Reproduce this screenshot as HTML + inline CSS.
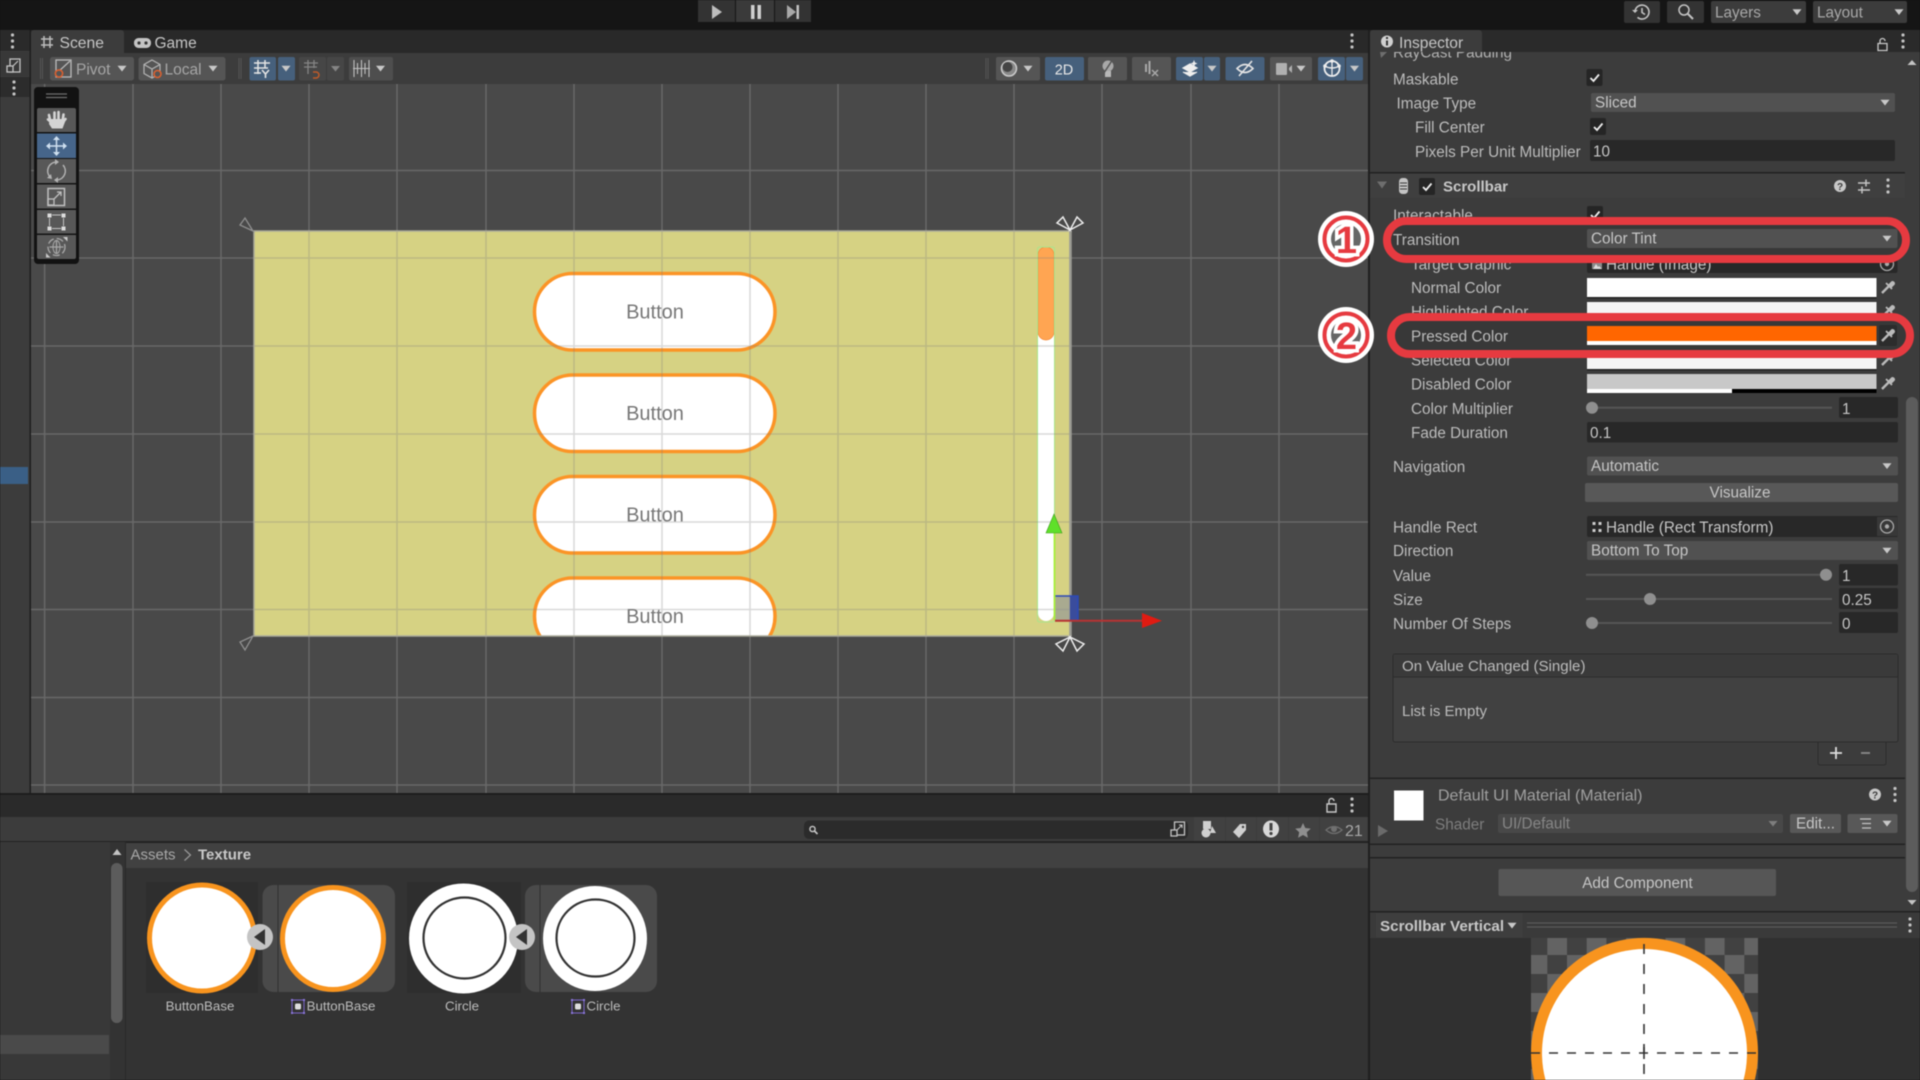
<!DOCTYPE html>
<html><head><meta charset="utf-8"><title>Unity Scrollbar</title>
<style>
html,body{margin:0;padding:0;background:#151515;width:1920px;height:1080px;overflow:hidden}
svg{display:block;filter:blur(.55px)}
text{font-family:"Liberation Sans",sans-serif;font-size:15.3px;fill:#bcbcbc}
.d{fill:#c6c6c6}
.m{fill:#8c8c8c}
.b{font-weight:bold;fill:#c8c8c8}
.n{font-size:13.3px;fill:#bdbdbd;text-anchor:middle}
.s{stroke:#c8c8c8;fill:none;stroke-width:1.6}
.bt{font-size:20px;fill:#777;text-anchor:middle}
</style></head><body>
<svg width="1920" height="1080" viewBox="0 0 1920 1080" xmlns="http://www.w3.org/2000/svg">
<defs>
<path id="a" d="M-4.5-2.8H4.5L0 3Z" fill="#c8c8c8"/>
<g id="e" fill="none" stroke="#bbb" stroke-width="1.8"><path d="M-6 6L1-1" stroke-width="2.4"/><path d="M-2-4l6 6"/><path d="M1-2l3-3a1.6 1.6 0 0 1 2 2l-3 3z" fill="#bbb"/></g>
<g id="v" fill="#c4c4c4"><circle cy="-6" r="1.6"/><circle r="1.6"/><circle cy="6" r="1.6"/></g>
<g id="c"><rect width="16" height="17" rx="2" fill="#252525"/><path d="M4 9l3 3 5.5-6.5" fill="none" stroke="#eee" stroke-width="1.8"/></g>
<g id="t"><circle r="6.5" fill="none" stroke="#aaa" stroke-width="1.3"/><circle r="2.2" fill="#aaa"/></g>
<g id="h"><circle r="6" fill="#c8c8c8"/><text x="0" y="4" text-anchor="middle" style="font-size:10px;font-weight:bold;fill:#3c3c3c">?</text></g>
<g id="sp"><g fill="none" stroke="#7a66c8" stroke-width="1"><rect x="0" y="0" width="12" height="13"/></g><path d="M-1-1h2v2h-2zM11-1h2v2h-2zM-1 12h2v2h-2zM11 12h2v2h-2z" fill="#8a76d8"/><rect x="3" y="3.500" width="6" height="6" rx="1.500" fill="#ddd"/></g>
<pattern id="ck" x="1527.6" y="936" width="39.4" height="38" patternUnits="userSpaceOnUse"><rect width="39.4" height="38" fill="#414141"/><rect x="19.7" width="19.7" height="19" fill="#636363"/><rect y="19" width="19.7" height="19" fill="#636363"/></pattern>
<clipPath id="yc"><rect x="254" y="231" width="816" height="405"/></clipPath>
<clipPath id="ic"><rect x="1370" y="52" width="550" height="30"/></clipPath>
</defs>

<!-- top bar -->
<rect width="1920" height="1080" fill="#1d1d1d"/>
<rect width="1920" height="30" fill="#151515"/>
<rect x="698" y="0" width="37" height="22" fill="#333"/><rect x="736" y="0" width="38" height="22" fill="#3a3a3a"/><rect x="775" y="0" width="36" height="22" fill="#333"/>
<path d="M712 5L722 12L712 19Z" fill="#bdbdbd"/>
<path d="M751 5h3.5v14H751zM757.5 5H761v14h-3.5z" fill="#cfcfcf"/>
<path d="M787 5L796 12L787 19Z" fill="#a8a8a8"/><rect x="796.500" y="5" width="2.5" height="14" fill="#c0c0c0"/>
<rect x="1624" y="1" width="36" height="22" rx="2" fill="#333"/>
<path d="M1635 12a7 7 0 1 1 2.5 5.4M1642 8v4.5l3 2" fill="none" stroke="#c4c4c4" stroke-width="1.6"/><path d="M1632 10l3 3 3-3z" fill="#c4c4c4"/>
<rect x="1667" y="1" width="37" height="22" rx="2" fill="#333"/>
<circle cx="1684" cy="10" r="5" fill="none" stroke="#c4c4c4" stroke-width="1.5"/><path d="M1688 14l5 5" stroke="#c4c4c4" stroke-width="2"/>
<rect x="1711" y="1" width="95" height="22" rx="2" fill="#3c3c3c"/><text x="1715" y="17.5" style="fill:#a8a8a8">Layers</text><use href="#a" x="1797" y="12"/>
<rect x="1813" y="1" width="94" height="22" rx="2" fill="#3c3c3c"/><text x="1817" y="17.5" style="fill:#a8a8a8">Layout</text><use href="#a" x="1899" y="12"/>

<!-- left strip -->
<rect x="0" y="30" width="30" height="763" fill="#3c3c3c"/>
<rect x="0" y="30" width="30" height="21" fill="#2a2a2a"/>
<rect x="0" y="52" width="30" height="24" fill="#383838"/>
<rect x="0" y="77" width="30" height="20" fill="#2c2c2c"/>
<rect x="0" y="467" width="28" height="17" fill="#3a5f86"/>
<use href="#v" x="12.5" y="41"/>
<use href="#v" x="14" y="88"/>
<rect x="10" y="59" width="10" height="13" fill="none" stroke="#c4c4c4" stroke-width="1.3"/><rect x="7" y="66" width="6" height="6" fill="#383838" stroke="#c4c4c4" stroke-width="1.3"/><path d="M13 66l5-5" stroke="#c4c4c4" stroke-width="1.2"/>
<rect x="29.5" y="30" width="1.5" height="763" fill="#1e1e1e"/>

<!-- tab bar + toolbar -->
<rect x="31" y="30" width="1337" height="23" fill="#292929"/>
<path d="M31 33a3 3 0 0 1 3-3h87a3 3 0 0 1 3 3v20H31z" fill="#3c3c3c"/>
<path d="M44 36v12M50 36v12M41 39h12M41 45h12" stroke="#bcbcbc" stroke-width="1.5"/>
<text x="59.500" y="48" class="d" style="font-size:15.700px">Scene</text>
<rect x="134" y="38" width="17" height="10" rx="4.5" fill="#c4c4c4"/><circle cx="139" cy="43" r="1.6" fill="#333"/><circle cx="146" cy="43" r="1.6" fill="#333"/>
<text x="154.5" y="48" class="d" style="font-size:15.500px">Game</text>
<use href="#v" x="1352" y="41"/>
<rect x="31" y="53" width="1337" height="31" fill="#3c3c3c"/>
<path d="M40.500 58v21M42.500 58v21M239 58v21M241 58v21M986 58v21M988 58v21" stroke="#555" stroke-width="1"/>
<rect x="50" y="57" width="84" height="23.500" rx="2.500" fill="#555"/>
<rect x="56" y="60" width="15" height="17" fill="none" stroke="#bbb" stroke-width="1.300"/><path d="M58 72L70 61" stroke="#bbb" stroke-width="1.200"/><circle cx="59" cy="73.500" r="3.600" fill="#555" stroke="#d96030" stroke-width="1.600"/>
<text x="76" y="74.500" style="fill:#a6a6a6;font-size:15.500px">Pivot</text><use href="#a" x="122" y="68.500"/>
<rect x="138.500" y="57" width="87" height="23.500" rx="2.500" fill="#555"/>
<path d="M152 60l8 4.500v9l-8 4.500-8-4.500v-9zM144 64.500l8 4.500 8-4.500M152 69v9" fill="none" stroke="#b4b4b4" stroke-width="1.200"/><circle cx="157.500" cy="74" r="3.500" fill="#555" stroke="#d96030" stroke-width="1.600"/>
<text x="164.500" y="74.500" style="fill:#a6a6a6;font-size:15.500px">Local</text><use href="#a" x="213" y="68.500"/>
<rect x="249.500" y="57" width="26.500" height="23.500" rx="2" fill="#46607c"/><rect x="278" y="57" width="17" height="23.500" rx="2" fill="#46607c"/>
<path d="M258 60v14M265 60v8M254 63h16M254 68h14M254 73h7" stroke="#e4e4e4" stroke-width="1.500"/><path d="M262 70l3.500 4 3.500-4M265.500 74v4" fill="none" stroke="#e4e4e4" stroke-width="1.600"/><use href="#a" x="286" y="68.500"/>
<rect x="299" y="57" width="27" height="23.500" rx="2" fill="#464646"/><rect x="327" y="57" width="17" height="23.500" rx="2" fill="#464646"/>
<path d="M308 60v14M314 60v8M304 63h14M304 67h13" stroke="#858585" stroke-width="1.300" fill="none"/><path d="M313 72h3a3 3 0 1 1 0 6h-3" stroke="#c05a28" stroke-width="1.500" fill="none"/><path d="M331 66h9l-4.500 5.500z" fill="#858585"/>
<rect x="349" y="57" width="44" height="23.500" rx="2" fill="#4e4e4e"/>
<path d="M354 60v17M369 60v17M357.500 63v11M361.500 60v17M365 63v11M353 68.500h17" stroke="#c0c0c0" stroke-width="1.100" fill="none"/><use href="#a" x="380.500" y="68.500"/>

<rect x="996" y="57" width="44" height="23.500" rx="2" fill="#555"/><circle cx="1009" cy="68.500" r="7.500" fill="#888" stroke="#ccc" stroke-width="1.500"/><circle cx="1007.500" cy="67" r="5" fill="#444"/><use href="#a" x="1028" y="68.500"/>
<rect x="1045" y="57" width="39" height="23.500" rx="2" fill="#46607c"/><text x="1064" y="74.500" text-anchor="middle" style="fill:#e8e8e8;font-size:14.500px">2D</text>
<rect x="1088" y="57" width="39" height="23.500" rx="2" fill="#555"/><circle cx="1108" cy="66" r="5.500" fill="#a8a8a8"/><rect x="1105" y="71" width="6" height="6" fill="#b8b8b8"/><path d="M1102 76l11-17" stroke="#555" stroke-width="1.500"/>
<rect x="1132" y="57" width="39" height="23.500" rx="2" fill="#555"/><path d="M1146 64v8M1149.500 61v13" stroke="#a8a8a8" stroke-width="2"/><path d="M1152 70l6 6M1158 70l-6 6" stroke="#a8a8a8" stroke-width="1.500"/>
<rect x="1176" y="57" width="27" height="23.500" rx="2" fill="#46607c"/><rect x="1204" y="57" width="16" height="23.500" rx="2" fill="#46607c"/>
<path d="M1183 72l7 4 7-4M1183 68l7 4 7-4-7-4z" fill="#eee" stroke="#eee" stroke-width="1.200"/><path d="M1194 60l1 2.500 2.500 1-2.500 1-1 2.500-1-2.500-2.500-1 2.500-1z" fill="#eee"/><use href="#a" x="1212" y="68.500"/>
<rect x="1225.500" y="57" width="39" height="23.500" rx="2" fill="#46607c"/><path d="M1237 68.500q8-8 16 0q-8 8-16 0z" fill="none" stroke="#e4e4e4" stroke-width="1.600"/><path d="M1239 76l13-15" stroke="#e4e4e4" stroke-width="1.600"/>
<rect x="1270" y="57" width="42" height="23.500" rx="2" fill="#555"/><rect x="1276" y="63" width="11" height="12" rx="1" fill="#b0b0b0"/><path d="M1289 68l3-3v8l-3-3z" fill="#b0b0b0"/><use href="#a" x="1301" y="68.500"/>
<rect x="1318" y="57" width="27" height="23.500" rx="2" fill="#46607c"/><rect x="1346" y="57" width="17" height="23.500" rx="2" fill="#46607c"/>
<circle cx="1332" cy="68.500" r="7.500" fill="none" stroke="#eee" stroke-width="1.800"/><path d="M1332 61v15M1324.500 66q7.500 4 15 0" fill="none" stroke="#eee" stroke-width="1.300"/><circle cx="1332" cy="61" r="1.800" fill="#eee"/><circle cx="1325" cy="66" r="1.800" fill="#eee"/><circle cx="1339" cy="66" r="1.800" fill="#eee"/><use href="#a" x="1354.500" y="68.500"/>

<!-- scene -->
<rect x="31" y="84" width="1337" height="709" fill="#494949"/>
<path d="M44.600 84V793M133 84V793M221 84V793M309 84V793M397 84V793M486 84V793M574 84V793M662 84V793M750 84V793M838 84V793M926 84V793M1014 84V793M1102 84V793M1191 84V793M1279 84V793M31 170.500H1368M31 258H1368M31 346H1368M31 434H1368M31 522H1368M31 609.500H1368M31 697.500H1368M31 785H1368" stroke="#686868" stroke-width="1.500"/>
<rect x="254" y="231" width="816" height="405" fill="#d6d283"/>
<g clip-path="url(#yc)">
<g fill="#fff" stroke="#fb9426" stroke-width="3.500">
<rect x="534.500" y="273.500" width="240.500" height="76.500" rx="38"/>
<rect x="534.500" y="375" width="240.500" height="76.500" rx="38"/>
<rect x="534.500" y="476.500" width="240.500" height="76.500" rx="38"/>
<rect x="534.500" y="578" width="240.500" height="76.500" rx="38"/>
</g>
<text x="655" y="318.500" class="bt">Button</text>
<text x="655" y="420" class="bt">Button</text>
<text x="655" y="521.500" class="bt">Button</text>
<text x="655" y="623" class="bt">Button</text>
<rect x="1038" y="247" width="16" height="374" rx="8" fill="#fff"/>
<rect x="1038" y="247" width="16" height="93" rx="8" fill="#ffa552" stroke="#f58a3a" stroke-width=".7"/>
<rect x="1037.500" y="247" width="17" height="375" rx="2" fill="none" stroke="#a9e58c" stroke-width="1"/>
<path d="M309 231V636M397 231V636M486 231V636M574 231V636M662 231V636M750 231V636M838 231V636M926 231V636M1014 231V636M254 258H1070M254 346H1070M254 434H1070M254 522H1070M254 609.500H1070" stroke="#808080" stroke-opacity=".3" stroke-width="1.500"/>
</g>
<path d="M254 231H1070V636H254z" fill="none" stroke="#a9a999" stroke-width="1.500"/>
<path d="M1070.500 231V636" stroke="#9c9c94" stroke-width="2.500"/>
<!-- gizmo -->
<rect x="1055" y="596" width="23" height="25" fill="#8b8f9a" fill-opacity=".6"/>
<rect x="1070" y="596" width="8" height="25" fill="#3a4c9c"/>
<path d="M1055 596H1078V620" fill="none" stroke="#2b49b8" stroke-width="1.500"/>
<path d="M1054.500 533V620" stroke="#a6f03a" stroke-width="1.800"/>
<path d="M1054 514L1062 533H1046Z" fill="#5fe02a" stroke="#3e9c1c" stroke-width=".6"/>
<path d="M1055 620.700H1144" stroke="#b83232" stroke-width="2"/>
<path d="M1142 613L1162 620.700L1142 628Z" fill="#e01b12"/>
<!-- corners -->
<g fill="none" stroke="#eee" stroke-width="1.500"><path d="M1070 230L1057 223L1063 217ZM1070 230L1083 223L1077 217Z"/><path d="M1070 637L1056 644L1063 651ZM1070 637L1084 644L1077 651Z"/></g>
<g fill="none" stroke="#8f8f8f" stroke-width="1.300"><path d="M253 231L240 225L245 218Z"/><path d="M253 636L240 642L245 650Z"/></g>
<!-- tools -->
<rect x="34" y="87" width="45" height="177" rx="4" fill="#121212"/>
<path d="M46 94h21M46 97.500h21" stroke="#707070" stroke-width="1.300"/>
<path d="M37 110a2 2 0 0 1 2-2h35a2 2 0 0 1 2 2v22H37z" fill="#585858"/>
<rect x="37" y="133.500" width="39" height="24.500" fill="#46658a"/>
<rect x="37" y="159" width="39" height="24" fill="#585858"/>
<rect x="37" y="184.500" width="39" height="24" fill="#585858"/>
<rect x="37" y="210" width="39" height="23.500" fill="#585858"/>
<path d="M37 235h39v22a2 2 0 0 1-2 2H39a2 2 0 0 1-2-2z" fill="#585858"/>
<g stroke="#d4d4d4" stroke-width="2.600" stroke-linecap="round" fill="none"><path d="M50.500 122l-1.500-7M54.500 120v-7.500M58.500 120v-8M62.500 121l1-6.500M51 122l-3-2.500M64 121l1.500-2"/></g>
<path d="M49.500 119h15l.5 3-2.500 6.500h-10.500L49 124z" fill="#d4d4d4"/>
<g stroke="#cfe0f0" stroke-width="1.500" fill="#cfe0f0"><path d="M56.500 138v16M48 146h17" fill="none"/><path d="M56.500 136l3.500 4h-7zM56.500 156l3.500-4h-7zM46 146l4-3.500v7zM67 146l-4-3.500v7z" stroke="none"/></g>
<path d="M50 177a9 9 0 0 1 6-15M63 165a9 9 0 0 1-6 15" fill="none" stroke="#b4b4b4" stroke-width="1.500"/><path d="M59 162l-4-3v6zM47 178l5 1-1-5zM54 180l4-3v6z" fill="#b4b4b4"/>
<rect x="48" y="188.500" width="16.500" height="17" fill="none" stroke="#c0c0c0" stroke-width="1.500"/><rect x="48" y="199" width="6" height="6" fill="none" stroke="#c0c0c0" stroke-width="1.300"/><path d="M54 199l7-7M57 192h4v4" fill="none" stroke="#c0c0c0" stroke-width="1.300"/>
<path d="M52 215h9M52 228.500h9M49.500 218v8M63.500 218v8" stroke="#c4c4c4" stroke-width="1"/><path d="M47.500 213.500h4v4h-4zM61.500 213.500h4v4h-4zM47.500 226.500h4v4h-4zM61.500 226.500h4v4h-4z" fill="#ddd"/>
<circle cx="56.500" cy="247" r="8.500" fill="none" stroke="#a8a8a8" stroke-width="1.300" stroke-dasharray="7 3"/><path d="M56.500 240v14M49.500 247h14" stroke="#a8a8a8" stroke-width="1.300"/><ellipse cx="56.500" cy="247" rx="3.500" ry="6.500" fill="none" stroke="#a8a8a8"/><path d="M63 237h4.500v4.500zM46 257.500h4.500L46 253z" fill="#c8c8c8"/>

<!-- project -->
<rect x="0" y="793" width="1368" height="2" fill="#1d1d1d"/>
<rect x="0" y="795" width="1368" height="22" fill="#2a2a2a"/>
<rect x="0" y="817" width="1368" height="24" fill="#3c3c3c"/>
<rect x="0" y="841" width="1368" height="1.500" fill="#232323"/>
<rect x="0" y="842" width="110" height="238" fill="#383838"/>
<rect x="0" y="1035" width="109" height="19" fill="#4a4a4a"/>
<rect x="110" y="842" width="15" height="238" fill="#333"/>
<rect x="111" y="863" width="11.500" height="160" rx="5.700" fill="#5c5c5c"/>
<path d="M112.500 855l4.500-6 4.500 6z" fill="#c4c4c4"/>
<rect x="125" y="842" width="1.500" height="238" fill="#292929"/>
<rect x="126" y="843" width="1242" height="25" fill="#414141"/>
<rect x="126" y="868" width="1242" height="212" fill="#333"/>
<text x="130.500" y="859.500" style="font-size:15px;fill:#a8a8a8">Assets</text>
<path d="M184.500 849.500l6 5.500-6 5.500" fill="none" stroke="#999" stroke-width="1.200"/>
<text x="198" y="859.500" class="b" style="font-size:15px">Texture</text>
<!-- project toolbar right -->
<path d="M1327 804h9v8h-9zM1329 804v-3a2.500 2.500 0 0 1 5 0" fill="none" stroke="#c8c8c8" stroke-width="1.400"/>
<use href="#v" x="1352" y="805"/>
<rect x="804" y="820.500" width="384" height="18.500" rx="5" fill="#2b2b2b"/>
<circle cx="812.500" cy="829" r="2.600" fill="none" stroke="#c8c8c8" stroke-width="1.400"/><path d="M814.500 831l3 3" stroke="#c8c8c8" stroke-width="1.600"/>
<rect x="1174.500" y="822" width="10" height="13" fill="none" stroke="#c4c4c4" stroke-width="1.300"/><rect x="1171" y="830" width="6" height="6" fill="#2b2b2b" stroke="#c4c4c4" stroke-width="1.300"/><path d="M1177 830l5-5M1179 825h3v3" fill="none" stroke="#c4c4c4" stroke-width="1.100"/>
<rect x="1194" y="817" width="31" height="24" fill="#414141"/><rect x="1226" y="817" width="30" height="24" fill="#414141"/><rect x="1257" y="817" width="31" height="24" fill="#414141"/><rect x="1289" y="817" width="30" height="24" fill="#414141"/><rect x="1320" y="817" width="47" height="24" fill="#414141"/>
<rect x="1203" y="821" width="8" height="8" fill="#d0d0d0"/><circle cx="1206" cy="833" r="4.500" fill="#d0d0d0"/><path d="M1212 826l4 7h-6z" fill="#d0d0d0"/>
<path d="M1233 832l7-8 6 0 0 6-7 8z" fill="#d0d0d0"/><circle cx="1243" cy="827" r="1.200" fill="#414141"/>
<ellipse cx="1271" cy="829" rx="8" ry="8.500" fill="#d8d8d8"/><rect x="1269.500" y="823" width="3" height="7.500" fill="#414141"/><circle cx="1271" cy="833.500" r="1.600" fill="#414141"/>
<path d="M1303 823l2.300 5 5.500.6-4 3.700 1.100 5.400-4.900-2.700-4.900 2.700 1.100-5.400-4-3.700 5.500-.6z" fill="#8f8f8f"/>
<path d="M1326 830q8-7 16 0q-8 7-16 0z" fill="none" stroke="#707070" stroke-width="1.300"/><circle cx="1334" cy="829" r="3" fill="#707070"/>
<text x="1345" y="836" style="font-size:16px;fill:#a8a8a8">21</text>

<!-- asset thumbs -->
<rect x="146" y="882" width="112" height="111" fill="#2e2e2e"/>
<rect x="407" y="882" width="114" height="111" fill="#2e2e2e"/>
<rect x="262.500" y="885" width="132.500" height="107" rx="11" fill="#4a4a4a"/>
<rect x="525" y="885" width="132" height="107" rx="11" fill="#4a4a4a"/>
<path d="M278 885v107M540 885v107" stroke="#2e2e2e" stroke-width="1"/>
<ellipse cx="202" cy="938" rx="52.500" ry="53" fill="#fff" stroke="#f8941e" stroke-width="5"/>
<ellipse cx="333" cy="938.500" rx="50.500" ry="51" fill="#fff" stroke="#f8941e" stroke-width="5"/>
<ellipse cx="463.500" cy="938.500" rx="54.500" ry="55" fill="#fff"/>
<ellipse cx="464.500" cy="938" rx="41" ry="40.500" fill="#fff" stroke="#333" stroke-width="2.200"/>
<ellipse cx="595" cy="938.500" rx="52" ry="52.500" fill="#fff"/>
<ellipse cx="595.500" cy="938" rx="39" ry="38.500" fill="#fff" stroke="#333" stroke-width="2.200"/>
<ellipse cx="260" cy="937" rx="13" ry="13" fill="#c4c4c4"/><path d="M265 929v16l-11-8z" fill="#333"/>
<ellipse cx="522" cy="937" rx="13" ry="13" fill="#c4c4c4"/><path d="M527 929v16l-11-8z" fill="#333"/>
<text x="200" y="1010.500" class="n">ButtonBase</text>
<text x="341" y="1010.500" class="n">ButtonBase</text>
<text x="462" y="1010.500" class="n">Circle</text>
<text x="603.500" y="1010.500" class="n">Circle</text>
<use href="#sp" x="292" y="1000"/><use href="#sp" x="572" y="1000"/>

<!-- inspector -->
<rect x="1368" y="30" width="2" height="1050" fill="#1f1f1f"/>
<rect x="1370" y="30" width="550" height="22" fill="#2a2a2a"/>
<rect x="1370" y="52" width="550" height="1028" fill="#3c3c3c"/>
<path d="M1370 33a3 3 0 0 1 3-3h106a3 3 0 0 1 3 3v19h-112z" fill="#3c3c3c"/>
<circle cx="1387" cy="41.500" r="6" fill="#d0d0d0"/><rect x="1386" y="40.500" width="2" height="5" fill="#333"/><rect x="1386" y="37" width="2" height="2" fill="#333"/>
<text x="1399" y="48" class="d" style="font-size:15.600px">Inspector</text>
<path d="M1878 43.500h9v7h-9zM1880 43.500v-2.500a2.500 2.500 0 0 1 5 0" fill="none" stroke="#c8c8c8" stroke-width="1.300"/>
<use href="#v" x="1903" y="41"/>
<g clip-path="url(#ic)"><text x="1393" y="57.500" style="fill:#b0b0b0">RayCast Padding</text></g>
<path d="M1380 52h7l-6 6z" fill="#6e6e6e"/>
<!-- scrollbar -->
<rect x="1906" y="397" width="12" height="495" rx="6" fill="#5c5c5c"/>
<path d="M1907.500 65l4.500-5 4.500 5z" fill="#c4c4c4"/><path d="M1907.500 900l4.500 5 4.500-5z" fill="#c4c4c4"/>
<text x="1393" y="84.500">Maskable</text><use href="#c" x="1586.500" y="69"/>
<text x="1396.500" y="108.500">Image Type</text>
<rect x="1591" y="93" width="304" height="19" rx="2" fill="#515151"/><text x="1595" y="107.500" class="d">Sliced</text><use href="#a" x="1885" y="102.500"/>
<text x="1415" y="132.500">Fill Center</text><use href="#c" x="1590" y="118"/>
<text x="1415" y="157">Pixels Per Unit Multiplier</text>
<rect x="1590" y="140" width="305" height="21" rx="2" fill="#282828"/><text x="1593" y="156.500" class="d">10</text>
<rect x="1370" y="172" width="535" height="1.500" fill="#222"/>
<rect x="1370" y="174" width="535" height="24" fill="#3f3f3f"/>
<path d="M1377 181.500h10l-5 7z" fill="#6e6e6e"/>
<rect x="1399" y="178" width="9" height="16" rx="3.500" fill="#c4c4c4"/><path d="M1400 183h7M1400 186h7M1400 189h7" stroke="#3c3c3c" stroke-width="1"/>
<use href="#c" x="1419" y="178"/>
<text x="1443" y="191.500" class="b" style="font-size:15px">Scrollbar</text>
<use href="#h" x="1840" y="186"/>
<path d="M1858 183h12M1858 190h12M1866 179.500v7M1862 186.500v7" stroke="#c4c4c4" stroke-width="1.500"/>
<use href="#v" x="1888" y="186"/>
<text x="1393" y="220.500">Interactable</text><use href="#c" x="1587" y="206"/>

<!-- covered rows -->
<text x="1411" y="269.500">Target Graphic</text>
<rect x="1587" y="252" width="310.500" height="21" rx="2" fill="#282828"/>
<path d="M1592 269v-9h10v9z" fill="#8a8a8a"/><path d="M1593 269l3-5 2 3 1-1 3 3z" fill="#ddd"/><text x="1606" y="269.500" class="d">Handle (Image)</text><use href="#t" x="1887" y="264"/>
<text x="1411" y="293">Normal Color</text>
<rect x="1587" y="278" width="289.500" height="19" fill="#fff"/><use href="#e" x="1888" y="287"/>
<rect x="1587" y="297" width="289.500" height="1.500" fill="#222"/>
<text x="1411" y="317">Highlighted Color</text>
<rect x="1587" y="302" width="289.500" height="19" fill="#f5f5f5"/><use href="#e" x="1888" y="311"/>
<text x="1411" y="365.500">Selected Color</text>
<rect x="1587" y="350" width="289.500" height="19" fill="#f5f5f5"/><use href="#e" x="1888" y="359"/>
<rect x="1587" y="369" width="289.500" height="1.500" fill="#222"/>

<!-- rings -->
<rect x="1387" y="221" width="519" height="38" rx="19" fill="#383838" stroke="#e63a40" stroke-width="8"/>
<rect x="1391" y="317" width="519" height="37" rx="18.500" fill="#383838" stroke="#e63a40" stroke-width="8"/>

<text x="1393" y="245">Transition</text>
<rect x="1587" y="229" width="310.500" height="19" rx="2" fill="#515151"/><text x="1591" y="243.500" class="d">Color Tint</text><use href="#a" x="1887" y="238.500"/>
<text x="1411" y="341.500">Pressed Color</text>
<rect x="1587" y="326" width="289.500" height="15" fill="#ff6600"/><rect x="1587" y="341" width="289.500" height="4" fill="#fff"/>
<rect x="1879" y="325" width="18" height="21" rx="2" fill="#2c2c2c"/><use href="#e" x="1888" y="335"/>

<text x="1411" y="389.500">Disabled Color</text>
<rect x="1587" y="374" width="289.500" height="15" fill="#c8c8c8"/><rect x="1587" y="389" width="145" height="4" fill="#fff"/><rect x="1732" y="389" width="144.500" height="4" fill="#000"/><use href="#e" x="1888" y="383"/>
<text x="1411" y="414">Color Multiplier</text>
<rect x="1587" y="406.700" width="245" height="2" fill="#555"/><circle cx="1592" cy="407.700" r="6" fill="#8f8f8f"/>
<rect x="1839" y="397" width="59" height="21" rx="2" fill="#282828"/><text x="1842" y="414" class="d">1</text>
<text x="1411" y="438">Fade Duration</text>
<rect x="1587" y="422" width="311" height="20.500" rx="2" fill="#282828"/><text x="1590" y="438" class="d">0.1</text>
<text x="1393" y="472">Navigation</text>
<rect x="1587" y="456.500" width="311" height="19" rx="2" fill="#515151"/><text x="1591" y="471" class="d">Automatic</text><use href="#a" x="1887" y="466"/>
<rect x="1585" y="483" width="313" height="19" rx="2" fill="#585858"/><text x="1740" y="497.500" text-anchor="middle" class="d">Visualize</text>
<text x="1393" y="532.500">Handle Rect</text>
<rect x="1587" y="516" width="311" height="21" rx="2" fill="#282828"/><rect x="1877" y="517" width="21" height="19" fill="#383838"/><text x="1606" y="532.500" class="d">Handle (Rect Transform)</text>
<path d="M1592.500 522h3v3h-3zM1598.500 522h3v3h-3zM1592.500 529h3v3h-3zM1598.500 529h3v3h-3z" fill="#ccc"/><use href="#t" x="1887" y="526.500"/>
<text x="1393" y="556">Direction</text>
<rect x="1587" y="541" width="311" height="19" rx="2" fill="#515151"/><text x="1591" y="555.500" class="d">Bottom To Top</text><use href="#a" x="1887" y="550.500"/>
<text x="1393" y="581">Value</text>
<rect x="1586" y="573.800" width="246" height="2" fill="#555"/><circle cx="1826" cy="574.800" r="6" fill="#8f8f8f"/>
<rect x="1839" y="564" width="59" height="21.500" rx="2" fill="#282828"/><text x="1842" y="581" class="d">1</text>
<text x="1393" y="605">Size</text>
<rect x="1586" y="598" width="246" height="2" fill="#555"/><circle cx="1650" cy="599" r="6" fill="#8f8f8f"/>
<rect x="1839" y="588" width="59" height="21" rx="2" fill="#282828"/><text x="1842" y="605" class="d">0.25</text>
<text x="1393" y="629">Number Of Steps</text>
<rect x="1586" y="622" width="246" height="2" fill="#555"/><circle cx="1592" cy="623" r="6" fill="#8f8f8f"/>
<rect x="1839" y="612" width="59" height="21" rx="2" fill="#282828"/><text x="1842" y="629" class="d">0</text>

<!-- event -->
<rect x="1393" y="654" width="505" height="88" rx="2" fill="#414141" stroke="#2c2c2c"/>
<rect x="1393.500" y="654.500" width="504" height="22.500" fill="#3a3a3a"/>
<path d="M1393 677H1898" stroke="#2c2c2c"/>
<text x="1402" y="671" style="font-size:15.100px">On Value Changed (Single)</text>
<text x="1402" y="716" style="font-size:15px">List is Empty</text>
<path d="M1818 742.500V763a2 2 0 0 0 2 2h64a2 2 0 0 0 2-2V742.500" fill="#3c3c3c" stroke="#2c2c2c"/>
<path d="M1830 753h12M1836 747v12" stroke="#ddd" stroke-width="1.800"/><path d="M1861 753h9" stroke="#8a8a8a" stroke-width="1.800"/>
<rect x="1370" y="777.500" width="535" height="1.500" fill="#222"/>

<!-- material -->
<text x="1438" y="800.500" style="fill:#a0a0a0;font-size:16px">Default UI Material (Material)</text>
<rect x="1394" y="790.500" width="29.500" height="30" fill="#fff"/>
<path d="M1378 825l10 6-10 6z" fill="#6a6a6a"/>
<text x="1435" y="829.500" style="fill:#7e7e7e;font-size:15.300px">Shader</text>
<rect x="1498" y="814" width="285" height="19" rx="2" fill="#484848"/><text x="1502" y="828.500" style="fill:#868686">UI/Default</text><path d="M1768.500 821h9l-4.500 5.500z" fill="#7e7e7e"/>
<rect x="1790" y="814" width="51" height="19" rx="2" fill="#585858"/><text x="1815.500" y="828.500" text-anchor="middle" class="d">Edit...</text>
<rect x="1847.500" y="814" width="50" height="19" rx="2" fill="#585858"/><path d="M1860 819h11M1862 823.500h9M1862 828h9" stroke="#c4c4c4" stroke-width="1.300"/><use href="#a" x="1887" y="823.500"/>
<use href="#h" x="1875" y="794.500"/><use href="#v" x="1895" y="794.500"/>
<rect x="1370" y="843.500" width="535" height="1.500" fill="#222"/>
<rect x="1370" y="857" width="535" height="1.500" fill="#222"/>
<rect x="1498.500" y="869" width="277.500" height="27" rx="2" fill="#565656"/>
<text x="1637.500" y="888" text-anchor="middle" class="d">Add Component</text>

<!-- preview header -->
<rect x="1370" y="911" width="550" height="1.500" fill="#222"/>
<rect x="1370" y="912.500" width="550" height="25" fill="#3a3a3a"/>
<rect x="1376" y="913" width="146.500" height="24" fill="#3e3e3e"/>
<text x="1380" y="931" class="b" style="font-size:15.200px">Scrollbar Vertical</text>
<use href="#a" x="1512" y="925.500"/>
<path d="M1527 923H1897M1527 927H1897" stroke="#5a5a5a" stroke-width="1.200"/>
<use href="#v" x="1910" y="925"/>
<rect x="1370" y="938" width="550" height="142" fill="#303030"/>
<rect x="1531" y="938" width="227" height="142" fill="url(#ck)"/>
<path d="M1534.200 1080A113.500 115 0 1 1 1754.800 1080Z" fill="#f8941e"/>
<path d="M1545.500 1080A102.500 104 0 1 1 1743.500 1080Z" fill="#fff"/>
<path d="M1644 938V1080" stroke="#333" stroke-width="1.600" stroke-dasharray="10 10" stroke-dashoffset="-6"/>
<path d="M1531 1053H1758" stroke="#333" stroke-width="1.600" stroke-dasharray="9 9"/>
<path d="M1644 1047V1059" stroke="#333" stroke-width="1.600"/>

<!-- circled numbers -->
<circle cx="1346" cy="239" r="28" fill="#fff"/><circle cx="1346" cy="239" r="21.500" fill="#fff" stroke="#e63a40" stroke-width="4"/><circle cx="1346" cy="239" r="15" fill="#666"/>
<text x="1346.500" y="253" text-anchor="middle" stroke="#fff" stroke-width="7" paint-order="stroke" style="font-size:38px;font-weight:bold;fill:#e63a40">1</text>
<circle cx="1346" cy="335" r="28" fill="#fff"/><circle cx="1346" cy="335" r="21.500" fill="#fff" stroke="#e63a40" stroke-width="4"/><circle cx="1346" cy="335" r="15" fill="#666"/>
<text x="1346.500" y="349" text-anchor="middle" stroke="#fff" stroke-width="7" paint-order="stroke" style="font-size:38px;font-weight:bold;fill:#e63a40">2</text>
</svg>
</body></html>
